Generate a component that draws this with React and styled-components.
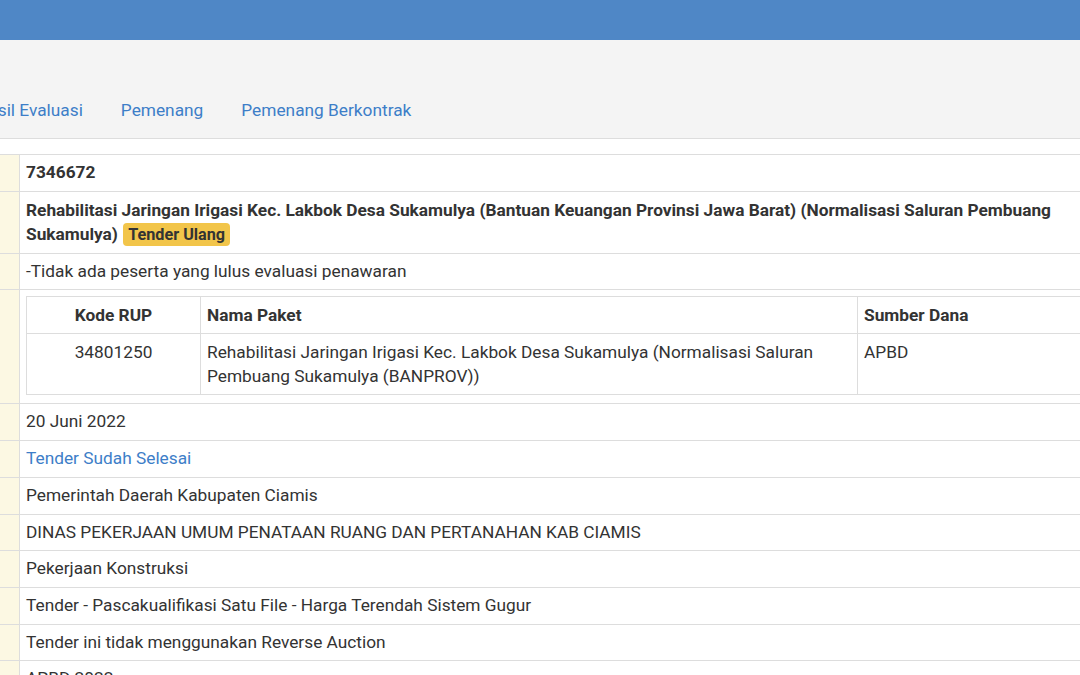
import React from "react";
import styled, { createGlobalStyle } from "styled-components";

const GlobalStyle = createGlobalStyle`
  html, body {
    margin: 0;
    padding: 0;
    background: #ffffff;
    overflow: hidden;
  }
  body {
    font-family: Roboto, "Liberation Sans", Arial, sans-serif;
    font-size: 17.3px;
    color: #333333;
  }
`;

const Page = styled.div`
  width: 1080px;
  height: 675px;
  overflow: hidden;
  display: flex;
  flex-direction: column;
`;

const TopBar = styled.div`
  height: 40px;
  flex: 0 0 40px;
  background: #4f87c6;
`;

const NavArea = styled.div`
  height: 98px;
  flex: 0 0 98px;
  background: #f4f4f4;
  border-bottom: 1px solid #dddddd;
  display: flex;
  align-items: flex-end;
  overflow: hidden;
`;

const Tabs = styled.ul`
  list-style: none;
  margin: 0 0 0 -24px;
  padding: 0;
  display: flex;
`;

const Tab = styled.li`
  padding: 0 19px 16px;
  line-height: 24px;
  color: #3d7ec8;
  white-space: nowrap;
  &:first-child {
    padding-left: 0;
  }
`;

const Spacer = styled.div`
  height: 15px;
  flex: 0 0 15px;
`;

const DetailTable = styled.table`
  width: 1100px;
  border-collapse: collapse;
  table-layout: fixed;
  border-top: 1px solid #dddddd;
`;

const Row = styled.tr`
  border-bottom: 1px solid #dddddd;
`;

const LabelCell = styled.td`
  width: 19px;
  background: #fcf8e3;
  border-right: 1px solid #dddddd;
  padding: 0;
`;

const ValueCell = styled.td`
  padding: ${(p) => (p.$nested ? "6px 6px 8px" : "6px 6px")};
  line-height: ${(p) => (p.$multi ? "24.5px" : "23.7px")};
  vertical-align: top;
  font-weight: ${(p) => (p.$bold ? 700 : 400)};
  color: ${(p) => (p.$link ? "#3d7ec8" : "#333333")};
`;

const Badge = styled.span`
  display: inline-block;
  background: #f2c54a;
  color: #333333;
  font-weight: 700;
  font-size: 16.2px;
  line-height: 21px;
  padding: 1px 5px;
  border-radius: 4px;
  margin-left: 1px;
  vertical-align: baseline;
`;

const RupTable = styled.table`
  width: 100%;
  border-collapse: collapse;
  table-layout: fixed;
  border: 1px solid #dddddd;
`;

const RupHead = styled.th`
  text-align: ${(p) => (p.$center ? "center" : "left")};
  font-weight: 700;
  padding: 6px 6px;
  line-height: 24px;
  border: 1px solid #dddddd;
  width: ${(p) => p.$w || "auto"};
`;

const RupCell = styled.td`
  text-align: ${(p) => (p.$center ? "center" : "left")};
  padding: 6px 6px;
  line-height: 24px;
  vertical-align: top;
  border: 1px solid #dddddd;
`;

const rows = [
  { text: "20 Juni 2022" },
  { text: "Tender Sudah Selesai", link: true },
  { text: "Pemerintah Daerah Kabupaten Ciamis" },
  { text: "DINAS PEKERJAAN UMUM PENATAAN RUANG DAN PERTANAHAN KAB CIAMIS" },
  { text: "Pekerjaan Konstruksi" },
  { text: "Tender - Pascakualifikasi Satu File - Harga Terendah Sistem Gugur" },
  { text: "Tender ini tidak menggunakan Reverse Auction" },
  { text: "APBD 2022" },
];

export default function App() {
  return (
    <>
      <GlobalStyle />
      <Page>
        <TopBar />
        <NavArea>
          <Tabs>
            <Tab>Hasil Evaluasi</Tab>
            <Tab>Pemenang</Tab>
            <Tab>Pemenang Berkontrak</Tab>
          </Tabs>
        </NavArea>
        <Spacer />
        <DetailTable>
          <tbody>
            <Row>
              <LabelCell />
              <ValueCell $bold>7346672</ValueCell>
            </Row>
            <Row>
              <LabelCell />
              <ValueCell $bold $multi>
                Rehabilitasi Jaringan Irigasi Kec. Lakbok Desa Sukamulya (Bantuan Keuangan Provinsi Jawa Barat)
                (Normalisasi Saluran Pembuang Sukamulya) <Badge>Tender Ulang</Badge>
              </ValueCell>
            </Row>
            <Row>
              <LabelCell />
              <ValueCell>-Tidak ada peserta yang lulus evaluasi penawaran</ValueCell>
            </Row>
            <Row>
              <LabelCell />
              <ValueCell $nested>
                <RupTable>
                  <thead>
                    <tr>
                      <RupHead $center $w="161px">Kode RUP</RupHead>
                      <RupHead $w="644px">Nama Paket</RupHead>
                      <RupHead>Sumber Dana</RupHead>
                    </tr>
                  </thead>
                  <tbody>
                    <tr>
                      <RupCell $center>34801250</RupCell>
                      <RupCell>
                        Rehabilitasi Jaringan Irigasi Kec. Lakbok Desa Sukamulya (Normalisasi Saluran Pembuang
                        Sukamulya (BANPROV))
                      </RupCell>
                      <RupCell>APBD</RupCell>
                    </tr>
                  </tbody>
                </RupTable>
              </ValueCell>
            </Row>
            {rows.map((r) => (
              <Row key={r.text}>
                <LabelCell />
                <ValueCell $link={r.link}>{r.text}</ValueCell>
              </Row>
            ))}
          </tbody>
        </DetailTable>
      </Page>
    </>
  );
}
